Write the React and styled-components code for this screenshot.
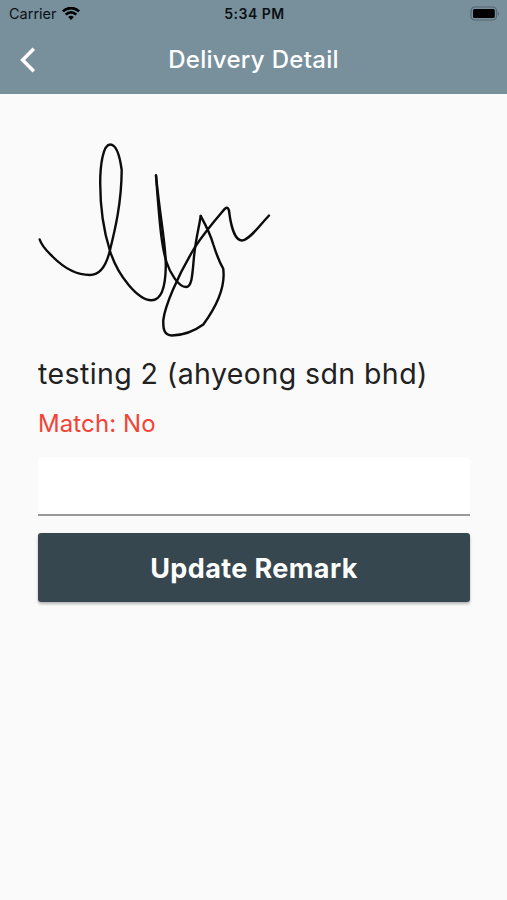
import React from "react";
import styled, { createGlobalStyle } from "styled-components";

const GlobalStyle = createGlobalStyle`
  * { box-sizing: border-box; }
  body { margin: 0; background: #fafafa; font-family: Inter, Roboto, sans-serif; }
`;

const Screen = styled.div`
  width: 507px;
  height: 900px;
  display: flex;
  flex-direction: column;
  background: #fafafa;
  overflow: hidden;
`;

const Header = styled.header`
  height: 94px;
  flex: none;
  background: #78909c;
`;

const StatusBar = styled.div`
  display: grid;
  grid-template-columns: 1fr auto 1fr;
  align-items: center;
  height: 27px;
  padding: 0 7px 0 9px;
  color: #0b1014;
`;

const Carrier = styled.div`
  display: flex;
  align-items: center;
  gap: 5px;
  font-size: 14.5px;
  line-height: 27px;
`;

const Time = styled.time`
  font-size: 14px;
  font-weight: 600;
  line-height: 27px;
  letter-spacing: 0.5px;
`;

const Battery = styled.svg`
  justify-self: end;
  display: block;
`;

const NavBar = styled.nav`
  display: grid;
  grid-template-columns: 76px 1fr 76px;
  align-items: center;
  height: 66px;
`;

const BackButton = styled.button`
  display: flex;
  width: 56px;
  height: 56px;
  padding: 0 0 0 20px;
  align-items: center;
  border: 0;
  background: none;
`;

const Title = styled.h1`
  margin: 0;
  text-align: center;
  color: #fff;
  font-size: 24px;
  font-weight: 500;
  line-height: 66px;
  letter-spacing: 0.3px;
`;

const Content = styled.main`
  display: flex;
  flex-direction: column;
  padding: 38px 37px 0 38px;
`;

const Signature = styled.svg`
  display: block;
  width: 240px;
  height: 218px;
`;

const Recipient = styled.div`
  height: 46px;
  line-height: 47px;
  font-size: 28.5px;
  letter-spacing: 0.42px;
  color: #212121;
  white-space: nowrap;
`;

const MatchStatus = styled.div`
  height: 61px;
  line-height: 56px;
  font-size: 24px;
  letter-spacing: 0.1px;
  color: #f44336;
`;

const RemarkInput = styled.input`
  width: 100%;
  height: 59px;
  padding: 0 16px;
  border: 0;
  border-bottom: 2px solid #999;
  border-radius: 5px 5px 0 0;
  background: #fff;
  outline: none;
  font: 24px Inter, sans-serif;
`;

const UpdateButton = styled.button`
  height: 69px;
  margin-top: 17px;
  padding: 1px 0 0;
  border: 0;
  border-radius: 3px;
  background: #37474f;
  box-shadow: 0 2px 3px rgba(0, 0, 0, 0.28);
  color: #fff;
  font: 700 27px/69px Inter, sans-serif;
  letter-spacing: 0.4px;
`;

const STROKES = [
  "M39.7 239.5C42 247 48 252 53 257C63 267 75 275 90 275C101 275 106.5 265 110 250C115 230 121.5 203 121.7 170C119.5 154 116 144.5 110.3 144.5C103 144.5 100.2 165 100.2 183C100.2 210 104 232 110 251C118 276 138 300.3 151.5 300.3C161 300.3 165.5 289 165.8 266C166 245 161 225 156 175.5",
  "M156 175.5C160 230 162 248 166.5 262C170 273 178.5 287 186 287C191.5 287 192.3 277 193.7 260C195.3 240 199 228 200.7 216",
  "M200.7 216C205 224 210 233 213.5 245C217 256 220.5 264 223.2 268.5C225.5 285 219 303 203.3 324.5C193 332 182 335.3 172 335.5C164 335.3 163 329 163.3 320C165 306 177 277 195 247C207 229 217 218 225 208.6C227.5 206.5 229 208.5 229.3 213C231 226 235 240.5 242 240.5C249 240.5 260 225 269 215.5",
];

export default function App() {
  return (
    <Screen>
      <GlobalStyle />
      <Header>
        <StatusBar>
          <Carrier>
            Carrier
            <svg width="18" height="14" viewBox="0 0 18 14" fill="none" stroke="#000" strokeWidth="2.7">
              <path d="M.9 4.4C5.4 0 12.6 0 17.1 4.4" />
              <path d="M3.7 7.6C6.7 4.7 11.3 4.7 14.3 7.6" />
              <path d="M6.2 10.1Q9 7.6 11.8 10.1L9 13Z" fill="#000" stroke="none" />
            </svg>
          </Carrier>
          <Time>5:34 PM</Time>
          <Battery width="30" height="15" viewBox="0 0 30 15">
            <rect x="1" y="1" width="25.5" height="13" rx="3.8" fill="none" stroke="#53656e" strokeWidth="1.2" />
            <rect x="3" y="3" width="21.8" height="9" rx="1.5" fill="#000" />
            <path d="M28 5.2Q30.2 7.5 28 9.8Z" fill="#53656e" />
          </Battery>
        </StatusBar>
        <NavBar>
          <BackButton aria-label="Back">
            <svg width="16" height="26" viewBox="0 0 16 26" fill="none" stroke="#fff" strokeWidth="3.5">
              <path d="M13.8 1.8L2.6 13L13.8 24.2" />
            </svg>
          </BackButton>
          <Title>Delivery Detail</Title>
        </NavBar>
      </Header>
      <Content>
        <Signature viewBox="38 132 240 218" fill="none" stroke="#0c0c0c" strokeWidth="2.4" strokeLinecap="round" strokeLinejoin="round">
          {STROKES.map((d) => <path key={d} d={d} />)}
        </Signature>
        <Recipient>testing 2 (ahyeong sdn bhd)</Recipient>
        <MatchStatus>Match: No</MatchStatus>
        <RemarkInput aria-label="Remark" />
        <UpdateButton>Update Remark</UpdateButton>
      </Content>
    </Screen>
  );
}
